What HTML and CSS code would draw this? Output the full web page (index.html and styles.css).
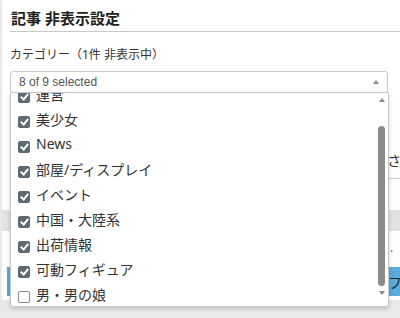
FILE: index.html
```html
<!DOCTYPE html>
<html lang="ja">
<head>
  <meta charset="UTF-8">
  <title>記事 非表示設定</title>
  <link rel="stylesheet" href="styles.css">
</head>
<body>

<div class="panel">
  <h2 class="title">記事 非表示設定</h2>

  <div class="field">
    <label class="label">カテゴリー（1件 非表示中）</label>
    <div class="multiselect">
      <div class="ms-box">
        <span>8 of 9 selected</span>
        <span class="caret-up"></span>
      </div>

      <div class="ms-drop">
        <ul class="ms-list">
          <li><span class="check on"></span>運営</li>
          <li><span class="check on"></span>美少女</li>
          <li><span class="check on"></span>News</li>
          <li><span class="check on"></span>部屋/ディスプレイ</li>
          <li><span class="check on"></span>イベント</li>
          <li><span class="check on"></span>中国・大陸系</li>
          <li><span class="check on"></span>出荷情報</li>
          <li><span class="check on"></span>可動フィギュア</li>
          <li><span class="check"></span>男・男の娘</li>
        </ul>
        <div class="ms-scroll">
          <span class="arrow up"></span>
          <span class="thumb"></span>
          <span class="arrow down"></span>
        </div>
      </div>
    </div>
  </div>

  <p class="hint">タイトルに含まれるキーワードを改行区切りで入力してください</p>

  <div class="table-head"></div>
  <div class="table-row">.</div>

  <div class="actions">
    <button class="btn btn-wide">リセット</button>
    <button class="btn">フィルタを保存</button>
  </div>
</div>

</body>
</html>
```

FILE: styles.css
```css
body {
  margin: 0;
  width: 400px;
  height: 318px;
  overflow: hidden;
  background: #e9e9e9;
  font-family: "Noto Sans", "Noto Sans CJK JP", sans-serif;
  color: #333;
}
.panel {
  margin-left: 2px;
  width: 420px;
  height: 300px;
  background: #fff;
  padding-left: 8px;
  box-sizing: border-box;
}
.title {
  margin: 0;
  padding: 7px 0 0 1px;
  height: 24px;
  font-size: 15px;
  line-height: 22px;
  font-weight: bold;
  color: #222;
  border-bottom: 1px solid #c8c8c8;
}
.field {
  padding-top: 14px;
}
.label {
  display: block;
  font-size: 12px;
  line-height: 18px;
  margin-bottom: 7px;
  color: #333;
}
.multiselect {
  position: relative;
  width: 378px;
}
.ms-box {
  height: 20px;
  border: 1px solid #c8c8c8;
  border-radius: 3px;
  display: flex;
  align-items: center;
  justify-content: space-between;
  padding: 0 8px;
  font-family: "Liberation Sans", sans-serif;
  font-size: 12px;
  color: #555;
}
.caret-up {
  width: 0;
  height: 0;
  border-left: 3px solid transparent;
  border-right: 3px solid transparent;
  border-bottom: 4px solid #8a8a8a;
}

/* dropdown list, open over the form */
.ms-drop {
  position: absolute;
  top: 21px;
  left: 0;
  width: 377px;
  height: 213px;
  background: #fff;
  border: 1px solid #c8c8c8;
  border-radius: 0 0 3px 3px;
  box-shadow: 0 2px 4px rgba(0, 0, 0, 0.18);
  display: flex;
  overflow: hidden;
  z-index: 2;
}
.ms-list {
  flex: 1;
  list-style: none;
  margin: -12px 0 0 0;
  padding: 0;
}
.ms-list li {
  height: 25px;
  display: flex;
  align-items: center;
  padding-left: 7px;
  font-size: 14px;
  color: #333;
}
.check {
  width: 10px;
  height: 10px;
  margin: 6px 6px 0 0;
  border: 1px solid #8a8a8a;
  border-radius: 2px;
  background: #fff;
  position: relative;
}
.check.on {
  background: #5e6a72;
  border-color: #5e6a72;
}
.check.on::after {
  content: "";
  position: absolute;
  left: 3px;
  top: 0;
  width: 3px;
  height: 6px;
  border: solid #fff;
  border-width: 0 2px 2px 0;
  transform: rotate(40deg);
}
.ms-scroll {
  width: 9px;
  margin-right: 2px;
  display: flex;
  flex-direction: column;
  align-items: center;
}
.arrow {
  width: 0;
  height: 0;
  border-left: 3px solid transparent;
  border-right: 3px solid transparent;
}
.arrow.up {
  margin-top: 5px;
  border-bottom: 4px solid #8a8a8a;
}
.arrow.down {
  margin-top: 5px;
  border-top: 4px solid #8a8a8a;
}
.thumb {
  margin-top: 24px;
  width: 7px;
  height: 160px;
  border-radius: 4px;
  background: #8b8b8b;
}

/* rest of the form behind the list */
.hint {
  margin: 58px 0 0 0;
  height: 27px;
  font-size: 14px;
  line-height: 20px;
  white-space: nowrap;
  overflow: hidden;
  border-bottom: 1px solid #d0d0d0;
}
.table-head {
  margin: 31px 0 0 -8px;
  height: 21px;
  background: #e2e2e2;
}
.table-row {
  height: 36px;
  font-size: 12px;
  line-height: 34px;
  padding-left: 380px;
  color: #667;
}
.actions {
  display: flex;
  gap: 13px;
  margin-left: -3px;
  overflow: hidden;
}
.btn {
  flex: none;
  height: 29px;
  border: none;
  background: #5aaade;
  color: #1e2a33;
  font-family: "Noto Sans CJK JP", sans-serif;
  font-size: 14px;
  padding: 0 8px;
  white-space: nowrap;
}
.btn-wide {
  width: 360px;
}
```
